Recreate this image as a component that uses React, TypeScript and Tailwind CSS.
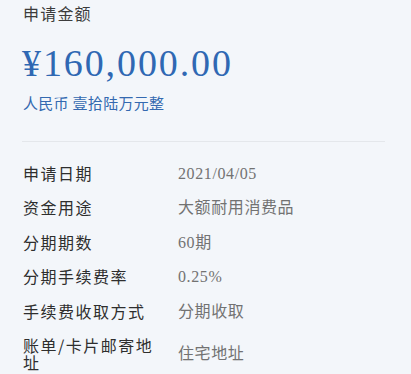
export default function App() {
  const rows: { label: string; value: string }[] = [
    { label: "申请日期", value: "2021/04/05" },
    { label: "资金用途", value: "大额耐用消费品" },
    { label: "分期期数", value: "60期" },
    { label: "分期手续费率", value: "0.25%" },
    { label: "手续费收取方式", value: "分期收取" },
    { label: "账单/卡片邮寄地址", value: "住宅地址" },
  ];

  return (
    <div className="min-h-screen w-full bg-[#f3f6fa] px-[23px] font-['Noto_Sans_CJK_SC',sans-serif]">
      {/* AMOUNT */}
      <div className="pt-[2px] text-[16px] leading-[22px] tracking-[1.2px] text-[#3c3c3c]">
        申请金额
      </div>
      <div className="mt-[17px] -ml-[1px] font-['Liberation_Serif','Noto_Sans_CJK_SC',serif] text-[38px] leading-[44px] tracking-[1.9px] text-[#2f68b3]">
        ¥160,000.00
      </div>
      <div className="mt-[8px] text-[15px] leading-[20px] tracking-[0.3px] text-[#3469b0]">
        人民币 壹拾陆万元整
      </div>

      <div className="mt-[28px] -ml-[1px] h-px w-[363px] bg-[#e4e7eb]" />

      {/* DETAILS */}
      <div className="mt-[23px] flex flex-col gap-y-[17.4px]">
        {rows.map((r) => (
          <div key={r.label} className="flex items-center">
            <div className="w-[135px] shrink-0 text-[16px] leading-[17px] tracking-[1.5px] text-[#2e2e2e]">
              {r.label}
            </div>
            <div className="ml-[20px] font-['Liberation_Serif','Noto_Sans_CJK_SC',serif] text-[16px] leading-[17px] tracking-[0.6px] text-[#727272]">
              {r.value}
            </div>
          </div>
        ))}
      </div>
    </div>
  );
}
